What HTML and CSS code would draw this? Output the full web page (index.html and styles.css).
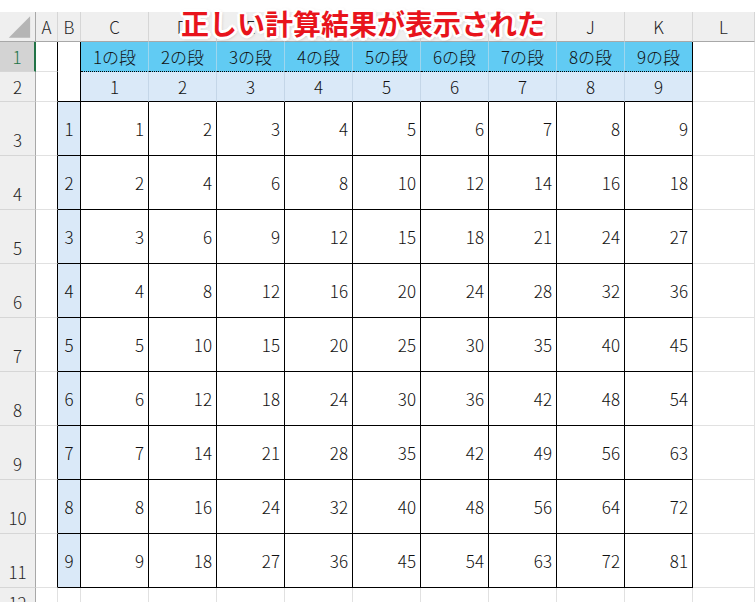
FILE: index.html
```html
<!DOCTYPE html>
<html lang="ja">
<head>
<meta charset="utf-8">
<title>九九の表</title>
<link rel="stylesheet" href="styles.css">
</head>
<body>
<div class="sheet">
  <div class="title">正しい計算結果が表示された</div>
  <div class="grid">
    <!-- header row -->
    <div class="corner"><svg width="36" height="30" viewBox="0 0 36 30"><polygon points="31,4 31,26 9,26" fill="#b5b5b5"/></svg></div>
    <div class="ch">A</div><div class="ch">B</div><div class="ch">C</div><div class="ch">D</div><div class="ch">E</div><div class="ch">F</div><div class="ch">G</div><div class="ch">H</div><div class="ch">I</div><div class="ch">J</div><div class="ch">K</div><div class="ch">L</div>

    <!-- row 1 -->
    <div class="rh sel">1</div>
    <div class="c aedge"></div>
    <div class="c bm"></div>
    <div class="c h1">1の段</div><div class="c h1">2の段</div><div class="c h1">3の段</div><div class="c h1">4の段</div><div class="c h1">5の段</div><div class="c h1">6の段</div><div class="c h1">7の段</div><div class="c h1">8の段</div><div class="c h1 end">9の段</div>
    <div class="c"></div>

    <!-- row 2 -->
    <div class="rh mid">2</div>
    <div class="c aedge"></div>
    <div class="c h2">1</div><div class="c h2">2</div><div class="c h2">3</div><div class="c h2">4</div><div class="c h2">5</div><div class="c h2">6</div><div class="c h2">7</div><div class="c h2">8</div><div class="c h2 end">9</div>
    <div class="c"></div>

    <!-- row 3 -->
    <div class="rh tall">3</div>
    <div class="c aedge"></div>
    <div class="c bn">1</div>
    <div class="c n">1</div><div class="c n">2</div><div class="c n">3</div><div class="c n">4</div><div class="c n">5</div><div class="c n">6</div><div class="c n">7</div><div class="c n">8</div><div class="c n">9</div>
    <div class="c"></div>

    <!-- row 4 -->
    <div class="rh tall">4</div>
    <div class="c aedge"></div>
    <div class="c bn">2</div>
    <div class="c n">2</div><div class="c n">4</div><div class="c n">6</div><div class="c n">8</div><div class="c n">10</div><div class="c n">12</div><div class="c n">14</div><div class="c n">16</div><div class="c n">18</div>
    <div class="c"></div>

    <!-- row 5 -->
    <div class="rh tall">5</div>
    <div class="c aedge"></div>
    <div class="c bn">3</div>
    <div class="c n">3</div><div class="c n">6</div><div class="c n">9</div><div class="c n">12</div><div class="c n">15</div><div class="c n">18</div><div class="c n">21</div><div class="c n">24</div><div class="c n">27</div>
    <div class="c"></div>

    <!-- row 6 -->
    <div class="rh tall">6</div>
    <div class="c aedge"></div>
    <div class="c bn">4</div>
    <div class="c n">4</div><div class="c n">8</div><div class="c n">12</div><div class="c n">16</div><div class="c n">20</div><div class="c n">24</div><div class="c n">28</div><div class="c n">32</div><div class="c n">36</div>
    <div class="c"></div>

    <!-- row 7 -->
    <div class="rh tall">7</div>
    <div class="c aedge"></div>
    <div class="c bn">5</div>
    <div class="c n">5</div><div class="c n">10</div><div class="c n">15</div><div class="c n">20</div><div class="c n">25</div><div class="c n">30</div><div class="c n">35</div><div class="c n">40</div><div class="c n">45</div>
    <div class="c"></div>

    <!-- row 8 -->
    <div class="rh tall">8</div>
    <div class="c aedge"></div>
    <div class="c bn">6</div>
    <div class="c n">6</div><div class="c n">12</div><div class="c n">18</div><div class="c n">24</div><div class="c n">30</div><div class="c n">36</div><div class="c n">42</div><div class="c n">48</div><div class="c n">54</div>
    <div class="c"></div>

    <!-- row 9 -->
    <div class="rh tall">9</div>
    <div class="c aedge"></div>
    <div class="c bn">7</div>
    <div class="c n">7</div><div class="c n">14</div><div class="c n">21</div><div class="c n">28</div><div class="c n">35</div><div class="c n">42</div><div class="c n">49</div><div class="c n">56</div><div class="c n">63</div>
    <div class="c"></div>

    <!-- row 10 -->
    <div class="rh tall">10</div>
    <div class="c aedge"></div>
    <div class="c bn">8</div>
    <div class="c n">8</div><div class="c n">16</div><div class="c n">24</div><div class="c n">32</div><div class="c n">40</div><div class="c n">48</div><div class="c n">56</div><div class="c n">64</div><div class="c n">72</div>
    <div class="c"></div>

    <!-- row 11 -->
    <div class="rh tall">11</div>
    <div class="c aedge"></div>
    <div class="c bn">9</div>
    <div class="c n">9</div><div class="c n">18</div><div class="c n">27</div><div class="c n">36</div><div class="c n">45</div><div class="c n">54</div><div class="c n">63</div><div class="c n">72</div><div class="c n">81</div>
    <div class="c"></div>

    <!-- row 12 -->
    <div class="rh">12</div>
    <div class="c"></div><div class="c"></div><div class="c"></div><div class="c"></div><div class="c"></div><div class="c"></div><div class="c"></div><div class="c"></div><div class="c"></div><div class="c"></div><div class="c"></div><div class="c"></div>
  </div>
</div>
</body>
</html>
```

FILE: styles.css
```css
html, body {
  margin: 0;
  padding: 0;
  overflow: hidden;
  background: #ffffff;
}

body {
  font-family: "Noto Sans CJK JP", "Noto Sans", sans-serif;
  font-size: 17px;
  font-weight: 300;
  color: #111;
}

.sheet {
  position: relative;
  padding-top: 12px;
}

.grid {
  display: grid;
  grid-template-columns: 36px 22px 23px repeat(9, 68px) 1fr;
  grid-template-rows: 30px 30px 30px repeat(9, 54px) 30px;
}

.grid > div {
  box-sizing: border-box;
  line-height: 20px;
  display: flex;
  align-items: center;
  min-width: 0;
}

.corner {
  background: #efefef;
  border-right: 1px solid #a8a8a8;
  border-bottom: 1px solid #a8a8a8;
}
.corner svg { display: block; }

.ch {
  background: #efefef;
  justify-content: center;
  border-right: 1px solid #d6d6d6;
  border-bottom: 1px solid #a8a8a8;
  color: #262626;
}

.rh {
  background: #efefef;
  justify-content: center;
  border-right: 1px solid #a8a8a8;
  border-bottom: 1px solid #d6d6d6;
  color: #262626;
}
.rh.tall {
  align-items: flex-end;
  padding-bottom: 5px;
}
.rh.sel {
  background: #d3d3d3;
  color: #217346;
  border-right: 2px solid #217346;
}

.c {
  border-right: 1px solid #e1e1e1;
  border-bottom: 1px solid #e1e1e1;
}

.aedge {
  border-right-color: #000;
}

.bm {
  grid-row: span 2;
  border-right-color: #000;
  border-bottom-color: #000;
}

.h1 {
  background: #61cbf3;
  justify-content: center;
  border-right-color: #9ed6ee;
  border-bottom: 1px dotted #000;
}

.h2 {
  background: #dae9f8;
  justify-content: center;
  border-right-color: #c4d6e8;
  border-bottom-color: #000;
}

.end {
  border-right-color: #000;
}

.bn {
  background: #dae9f8;
  justify-content: center;
  border-right-color: #000;
  border-bottom-color: #000;
}

.n {
  justify-content: flex-end;
  padding-right: 4px;
  border-right-color: #000;
  border-bottom-color: #000;
}

.title {
  position: absolute;
  left: 181px;
  top: 9px;
  z-index: 2;
  font-size: 28px;
  line-height: 28px;
  font-weight: 700;
  color: #e8141c;
  white-space: nowrap;
  text-shadow:
    2px 0 0 #fff, -2px 0 0 #fff, 0 2px 0 #fff, 0 -2px 0 #fff,
    2px 2px 0 #fff, -2px -2px 0 #fff, 2px -2px 0 #fff, -2px 2px 0 #fff,
    3px 0 0 #fff, -3px 0 0 #fff, 0 3px 0 #fff, 0 -3px 0 #fff,
    1px 1px 4px rgba(0, 0, 0, 0.45);
}
```
